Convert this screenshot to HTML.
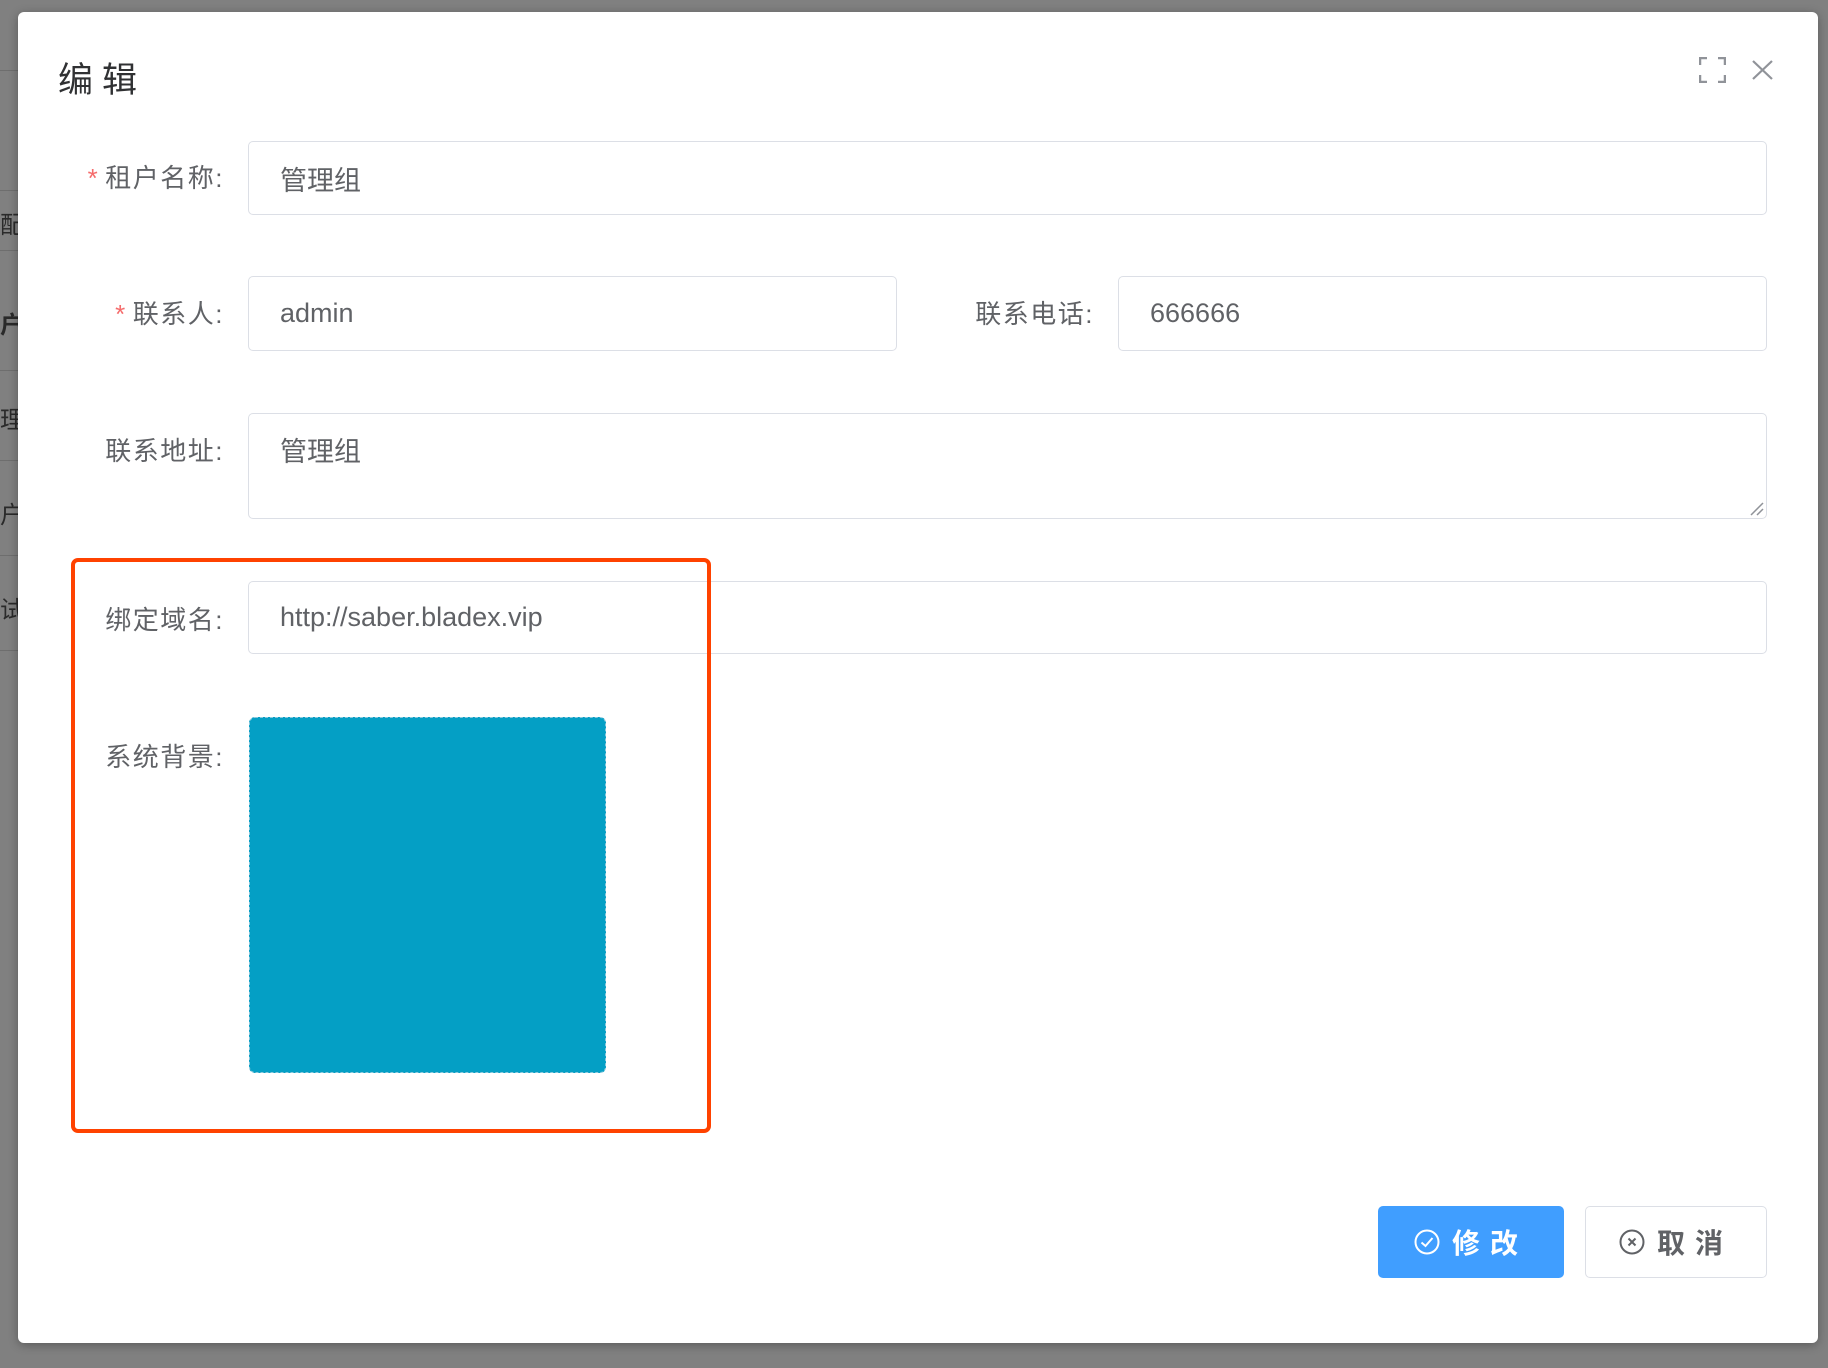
<!DOCTYPE html>
<html><head><meta charset="utf-8"><style>
*{box-sizing:border-box;margin:0;padding:0}
body{width:1828px;height:1368px;background:#808080;position:relative;overflow:hidden;font-family:"Liberation Sans","Noto Sans CJK SC",sans-serif;color:#606266}
.bgl{position:absolute;left:0;height:1px;width:18px;background:#6e6e6e}
.bgt{position:absolute;left:0;font-size:24px;color:#2a2a2a}
.dlg{position:absolute;left:18px;top:12px;width:1800px;height:1331px;background:#fff;border-radius:6px;box-shadow:0 2px 10px rgba(0,0,0,.3)}
.title{position:absolute;left:58px;top:52px;font-size:35px;color:#303133;letter-spacing:9px}
.lab{position:absolute;right:1604px;font-size:26px;letter-spacing:1.5px;color:#606266;white-space:nowrap;text-align:right}
.lab i{color:#f56c6c;font-style:normal;margin-right:6px}
.inp{position:absolute;border:1.5px solid #dcdfe6;border-radius:5px;font-size:27px;color:#606266;padding-left:31px;display:flex;align-items:center}
.btn{position:absolute;top:1206px;height:72px;border-radius:5px;display:flex;align-items:center;justify-content:center;font-size:28px;font-weight:bold;letter-spacing:10px}
</style></head><body>
<div class="bgl" style="top:70px"></div><div class="bgl" style="top:190px"></div><div class="bgl" style="top:250px"></div><div class="bgl" style="top:370px"></div><div class="bgl" style="top:460px"></div><div class="bgl" style="top:555px"></div><div class="bgl" style="top:650px"></div>
<div class="bgt" style="top:205px">配</div><div class="bgt" style="top:305px;font-weight:bold">户</div><div class="bgt" style="top:400px">理</div><div class="bgt" style="top:495px">户</div><div class="bgt" style="top:590px">试</div>
<div class="dlg"></div>
<div class="title">编辑</div>
<svg style="position:absolute;left:1699px;top:57px" width="27" height="26" fill="none" stroke="#909399" stroke-width="2.5"><path d="M1 8V1h7M19 1h7v7M26 18v7h-7M8 25H1v-7"/></svg>
<svg style="position:absolute;left:1752px;top:60px" width="21" height="20" stroke="#909399" stroke-width="2.2"><path d="M1 1l19 18M20 1L1 19"/></svg>

<div class="lab" style="top:158px"><i>*</i>租户名称:</div>
<div class="inp" style="left:248px;top:141px;width:1519px;height:74px">管理组</div>

<div class="lab" style="top:294px"><i>*</i>联系人:</div>
<div class="inp" style="left:248px;top:276px;width:649px;height:75px">admin</div>
<div class="lab" style="top:294px;right:734px">联系电话:</div>
<div class="inp" style="left:1118px;top:276px;width:649px;height:75px">666666</div>

<div class="lab" style="top:431px">联系地址:</div>
<div class="inp" style="left:248px;top:413px;width:1519px;height:106px;align-items:flex-start;padding-top:16px">管理组</div>
<svg style="position:absolute;left:1750px;top:502px" width="14" height="14" stroke="#909399" stroke-width="1.5"><path d="M1 13L13 1M7 13l6-6"/></svg>

<div class="lab" style="top:600px">绑定域名:</div>
<div class="inp" style="left:248px;top:581px;width:1519px;height:73px">http://saber.bladex.vip</div>
<div class="lab" style="top:737px">系统背景:</div>
<div style="position:absolute;left:249px;top:717px;width:357px;height:356px;background:#049fc5;border:1.5px dashed #8cc8dc;border-radius:6px"></div>
<div style="position:absolute;left:71px;top:558px;width:640px;height:575px;border:4px solid #ff4200;border-radius:7px"></div>

<div class="btn" style="left:1378px;width:186px;background:#409eff;color:#fff">
<svg width="26" height="26" fill="none" stroke="#fff" stroke-width="2" style="margin-right:12px"><circle cx="13" cy="13" r="11.5"/><path d="M7.5 13.5l4 3.5 7-8"/></svg>修改</div>
<div class="btn" style="left:1585px;width:182px;border:1.5px solid #dcdfe6;color:#606266;background:#fff">
<svg width="26" height="26" fill="none" stroke="#606266" stroke-width="2" style="margin-right:12px"><circle cx="13" cy="13" r="11.5"/><path d="M9.5 9.5l7 7M16.5 9.5l-7 7"/></svg>取消</div>
</body></html>
